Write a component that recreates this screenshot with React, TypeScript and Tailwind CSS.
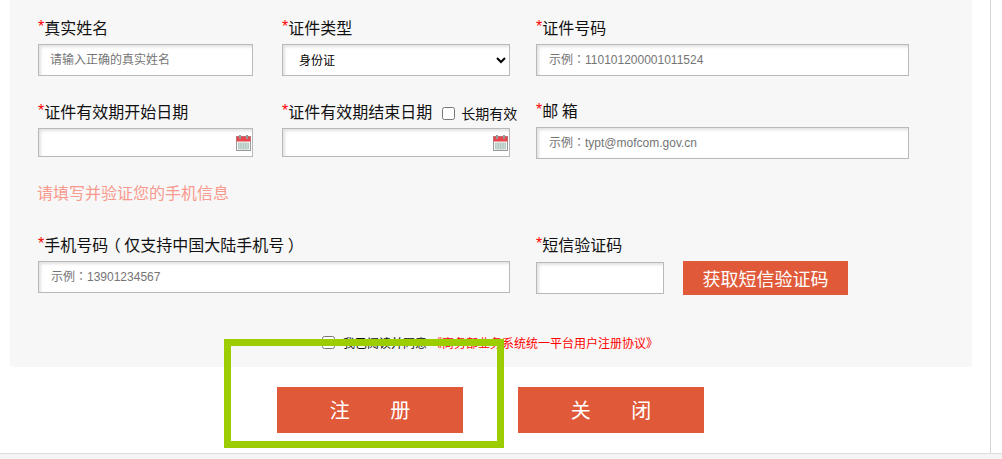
const font = { fontFamily: '"Noto Sans CJK SC", "Liberation Sans", sans-serif' };

const inputCls =
  "block h-[32px] w-full border border-[#b9b9b9] bg-white pl-[11px] text-[12px] text-[#333] shadow-[inset_2px_2px_3px_#e2e2e2] outline-none placeholder:text-[#757575] font-['Liberation_Sans','Noto_Sans_CJK_SC',sans-serif]";
const exampleCls =
  "block h-[32px] w-full border border-[#b9b9b9] bg-white pl-[12px] text-[12px] text-[#333] shadow-[inset_2px_2px_3px_#e2e2e2] outline-none placeholder:text-[#757575] font-['Liberation_Sans','Noto_Sans_CJK_JP',sans-serif]";

function Label({ children }: { children: React.ReactNode }) {
  return (
    <div className="flex h-[30px] items-center whitespace-nowrap pb-[4px] text-[16px] leading-none text-[#111]">
      <span className="font-['Liberation_Sans'] text-[#ff0000]">*</span>
      {children}
    </div>
  );
}

function Calendar() {
  return (
    <svg viewBox="0 0 15 16" className="absolute right-0.5 top-[7px] h-[16px] w-[15px]">
      <rect x="0.5" y="1.5" width="14" height="14" fill="#f4f6f2" stroke="#9a9a9a" />
      <rect x="0.5" y="1.5" width="14" height="5" fill="#e8454f" />
      <rect x="3" y="0" width="2" height="4" fill="#999" />
      <rect x="10" y="0" width="2" height="4" fill="#999" />
      <path d="M2.5 8h10v6h-10zM2.5 10h10M2.5 12h10M5 8v6M7.5 8v6M10 8v6" fill="#d7e6e0" stroke="#a5b8b2" strokeWidth="0.6" />
    </svg>
  );
}

function DateInput() {
  return (
    <div className="relative">
      <input className={inputCls + " !h-[29px]"} />
      <Calendar />
    </div>
  );
}

export default function App() {
  return (
    <div style={font} className="relative h-[459px] w-[1002px] overflow-hidden bg-white">
      <div className="flex h-[453px] w-[991px] flex-col border-r border-[#d4d4d4]">
        <div className="ml-[10px] h-[367px] w-[962px] rounded-b-[3px] bg-[#f7f7f7] px-[28px] pt-[14px]">
          <div className="flex">
            <div className="w-[215px]">
              <Label>真实姓名</Label>
              <input className={inputCls} placeholder="请输入正确的真实姓名" />
            </div>
            <div className="ml-[29px] w-[228px]">
              <Label>证件类型</Label>
              <select className="block h-[32px] w-full border border-[#b9b9b9] bg-white pb-[2px] pl-3 text-[12px] text-black shadow-[inset_2px_2px_3px_#e2e2e2] outline-none">
                <option>身份证</option>
              </select>
            </div>
            <div className="ml-[26px] w-[373px]">
              <Label>证件号码</Label>
              <input className={exampleCls} placeholder="示例：110101200001011524" />
            </div>
          </div>

          <div className="mt-[21px] flex">
            <div className="w-[215px] pt-px">
              <Label>证件有效期开始日期</Label>
              <DateInput />
            </div>
            <div className="ml-[29px] w-[228px] pt-px">
              <div className="flex items-center">
                <Label>证件有效期结束日期</Label>
                <input type="checkbox" className="ml-[10px] h-[13px] w-[13px]" />
                <span className="ml-[6px] whitespace-nowrap text-[14px] leading-none text-[#111]">长期有效</span>
              </div>
              <DateInput />
            </div>
            <div className="ml-[26px] w-[373px]">
              <Label>邮 箱</Label>
              <input className={exampleCls} placeholder="示例：typt@mofcom.gov.cn" />
            </div>
          </div>

          <div className="-ml-px mt-[21px] h-[24px] text-[16px] leading-[24px] text-[#f89a8e]">请填写并验证您的手机信息</div>

          <div className="mt-[27px] flex">
            <div className="w-[472px]">
              <Label>
                手机号码<span className="mx-1 [font-feature-settings:'palt']">（</span>仅支持中国大陆手机号<span className="mx-1 [font-feature-settings:'palt']">）</span>
              </Label>
              <input className={exampleCls} placeholder="示例：13901234567" />
            </div>
            <div className="ml-[26px]">
              <Label>短信验证码</Label>
              <div className="flex items-center">
                <input className={inputCls + " !w-[128px]"} />
                <button className="ml-[19px] h-[34px] w-[165px] bg-[#e05a3a] text-[18px] leading-none text-white">获取短信验证码</button>
              </div>
            </div>
          </div>

          <div className="mt-[41px] flex items-center pl-[284px] text-[12px] leading-none">
            <input type="checkbox" className="h-[13px] w-[13px]" />
            <span className="ml-2 text-[#111]">我已阅读并同意</span>
            <span className="ml-[3px] text-[#ff0000]">《商务部业务系统统一平台用户注册协议》</span>
          </div>
        </div>

        <div className="mt-[20px] flex pl-[277px]">
          <button className="h-[46px] w-[186px] bg-[#e05a3a] text-[20px] leading-none text-white [word-spacing:36px]">注 册</button>
          <button className="ml-[55px] h-[46px] w-[186px] bg-[#e05a3a] text-[20px] leading-none text-white [word-spacing:36px]">关 闭</button>
        </div>
      </div>
      <div className="h-[6px] border-t border-[#dcdcdc] bg-[#f4f4f4]" />

      <div className="absolute left-[224px] top-[339px] h-[109px] w-[280px] border-[7px] border-[#9bcd00]" />
    </div>
  );
}
